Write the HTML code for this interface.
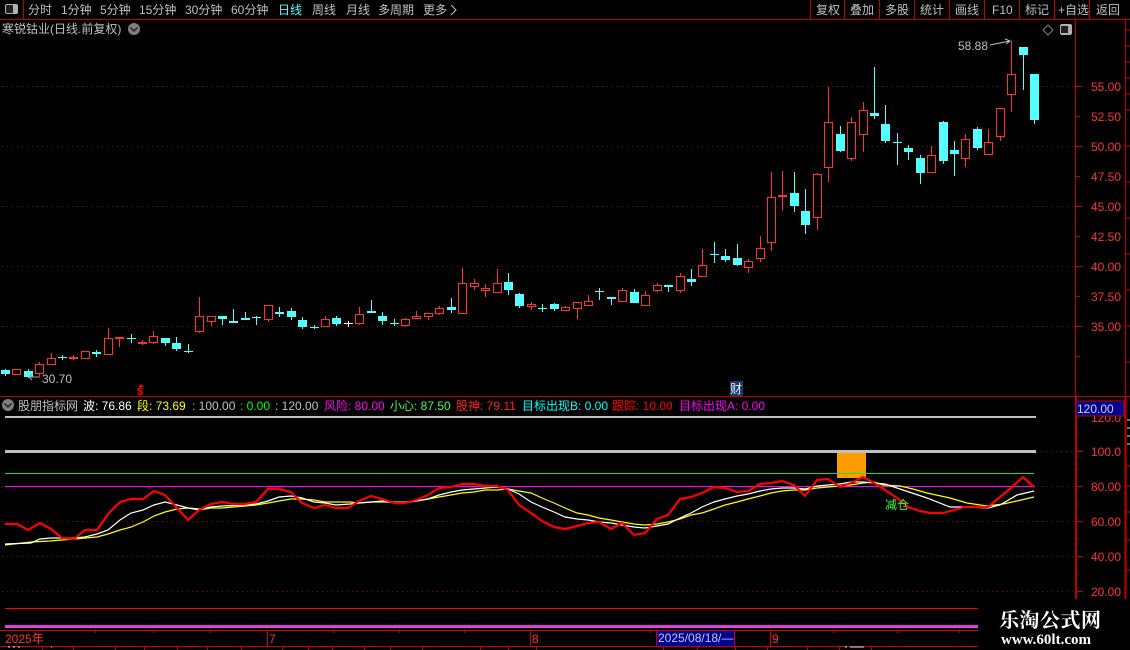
<!DOCTYPE html>
<html><head><meta charset="utf-8"><style>
html,body{margin:0;padding:0;background:#000;width:1130px;height:650px;overflow:hidden}
svg{display:block}
text{font-family:"Liberation Sans","WenQuanYi Zen Hei","Noto Sans CJK SC",sans-serif;font-size:12px;fill:#c0c0c0}
.c{shape-rendering:crispEdges}
.ax text{fill:#ff3232}
</style></head><body>
<svg width="1130" height="650" viewBox="0 0 1130 650" xmlns="http://www.w3.org/2000/svg">
<rect width="1130" height="650" fill="#000"/>
<!-- frame lines -->
<g class="c" stroke="#c00000" fill="none">
<path d="M0 19.5H1130M0 396.5H1130"/>
<path d="M23.5 0V19M810.5 0V19M844.5 0V19M879.5 0V19M914.5 0V19M949.5 0V19M984.5 0V19M1019.5 0V19M1054.5 0V19M1089.5 0V19"/>
<path d="M1075.5 19V396M1125.5 19V396"/>
<path d="M1125 30h5M1125 46h5M1125 62h5M1125 78h5M1125 94h5M1125 110h5M1125 146h5M1125 182h5M1125 218h5M1125 254h5M1125 290h5M1125 326h5M1125 362h5"/>
<path d="M1076 86.5h6M1076 116.5h4M1076 146.5h6M1076 176.5h4M1076 206.5h6M1076 236.5h4M1076 266.5h6M1076 296.5h4M1076 326.5h6M1076 356.5h4"/>
<path stroke-width="2" d="M1076 396V599M1125.5 396V599"/>
<path d="M1077 434h2M1077 451.5h6M1077 469h2M1077 486.5h6M1077 504h2M1077 521.5h6M1077 539h2M1077 556.5h6M1077 574h2M1077 591.5h6"/>
<path stroke="#e0e0e0" d="M1127 420h3M1127 428h3M1127 436h3M1127 444h3"/>
<path d="M1125 466h5M1125 486h5M1125 512h5M1125 540h5M1125 570h5"/>
</g>
<!-- dotted grid -->
<g class="c" stroke="#a00000" fill="none" stroke-dasharray="1 4">
<path d="M2 86.5H1075M2 146.5H1075M2 206.5H1075M2 266.5H1075M2 326.5H1075"/>
<path d="M1036 451.5H1075M2 486.5H1075M2 521.5H1075M2 556.5H1075M2 591.5H1075"/>
</g>
<!-- toolbar -->
<g class="c"><rect x="5" y="4" width="13" height="10" rx="2" fill="#b0b0b0"/><rect x="6" y="5" width="7" height="8" fill="#202020"/></g>
<text x="28" y="14">分时</text><text x="61" y="14">1分钟</text><text x="100" y="14">5分钟</text><text x="139" y="14">15分钟</text><text x="185" y="14">30分钟</text><text x="231" y="14">60分钟</text>
<text x="278" y="14" style="fill:#54ffff">日线</text><text x="312" y="14">周线</text><text x="346" y="14">月线</text><text x="378" y="14">多周期</text><text x="423" y="14">更多</text>
<path d="M451 5l5 5-5 5" stroke="#c0c0c0" fill="none"/>
<text x="816" y="14">复权</text><text x="850" y="14">叠加</text><text x="885" y="14">多股</text><text x="920" y="14">统计</text><text x="955" y="14">画线</text><text x="992" y="14">F10</text><text x="1025" y="14">标记</text><text x="1058" y="14">+自选</text><text x="1096" y="14">返回</text>
<text x="2" y="33">寒锐钴业(日线.前复权)</text>
<circle cx="134" cy="29" r="6" fill="#808080"/><path d="M130.500 27.500l3.500 3.500 3.500-3.500" stroke="#222" stroke-width="1.500" fill="none"/>
<path d="M1048 25l5 5-5 5-5-5z" stroke="#808080" fill="none"/>
<g class="c"><rect x="1060" y="24" width="12" height="11" rx="2" fill="#b0b0b0"/><rect x="1061" y="26" width="7" height="7" fill="#202020"/></g>
<!-- axis labels -->
<g class="ax">
<text x="1091" y="91">55.00</text><text x="1091" y="121">52.50</text><text x="1091" y="151">50.00</text><text x="1091" y="181">47.50</text><text x="1091" y="211">45.00</text><text x="1091" y="241">42.50</text><text x="1091" y="271">40.00</text><text x="1091" y="301">37.50</text><text x="1091" y="331">35.00</text>
<text x="1091" y="422">120.0</text><text x="1091" y="456">100.0</text><text x="1091" y="491">80.00</text><text x="1091" y="526">60.00</text><text x="1091" y="561">40.00</text><text x="1091" y="596">20.00</text>
</g>
<rect x="1076" y="401" width="48" height="15" fill="#000090" stroke="#c00000" class="c"/>
<text x="1077" y="413" style="fill:#d0d0f0">120.00</text>
<!-- candle wicks cyan -->
<path class="c" fill="none" stroke="#54ffff" d="M5.500 369V376M28.500 369V378M62.500 355V360M96.500 350V357M131.500 334V343M165.500 338V346M176.500 337V351M188.500 344V353M222.500 316V325M233.500 309V323M245.500 312V320M256.500 316V325M279.500 307V317M291.500 308V320M302.500 317V329M314.500 325V329M336.500 316V326M371.500 300V313M382.500 312V325M394.500 319V326M451.500 298V313M508.500 273V295M519.500 293V308M542.500 304V312M554.500 303V311M599.500 288V300M611.500 297V305M634.500 289V303M668.500 285V292M691.500 269V286M714.500 242V263M725.500 249V262M737.500 244V266M794.500 172V212M805.500 189V234M840.500 126V152M874.500 67V119M885.500 105V143M897.500 133V165M908.500 145V160M920.500 155V184M943.500 121V164M954.500 141V176M977.500 127V150M1023.500 47V90M1034.500 74V124"/>
<!-- candle bodies cyan -->
<path class="c" fill="#54ffff" d="M1 370h9v4h-9zM24 371h9v6h-9zM58 357h9v1h-9zM92 352h9v2h-9zM127 338h9v1h-9zM161 338h9v5h-9zM172 343h9v6h-9zM184 351h9v1h-9zM218 316h9v3h-9zM229 321h9v2h-9zM241 318h9v2h-9zM252 317h9v1h-9zM275 312h9v2h-9zM287 311h9v6h-9zM298 320h9v7h-9zM310 327h9v1h-9zM332 318h9v6h-9zM367 311h9v2h-9zM378 316h9v5h-9zM390 323h9v1h-9zM447 307h9v3h-9zM504 282h9v8h-9zM515 294h9v12h-9zM538 308h9v1h-9zM550 304h9v5h-9zM595 291h9v1h-9zM607 297h9v2h-9zM630 292h9v11h-9zM664 285h9v2h-9zM687 279h9v3h-9zM710 254h9v1h-9zM721 256h9v4h-9zM733 258h9v7h-9zM790 193h9v13h-9zM801 211h9v14h-9zM836 134h9v17h-9zM870 113h9v3h-9zM881 124h9v17h-9zM893 142h9v1h-9zM904 148h9v4h-9zM916 158h9v15h-9zM939 122h9v39h-9zM950 150h9v4h-9zM973 129h9v19h-9zM1019 47h9v8h-9zM1030 74h9v46h-9z"/>
<!-- white cross -->
<path class="c" stroke="#fff" fill="none" d="M348.500 321V327M344 323.500h9"/>
<!-- solid red -->
<path class="c" fill="none" stroke="#ff3232" d="M73.500 355V360M119.500 337V347M142.500 340V345M782.500 171V211"/>
<path class="c" fill="#ff3232" d="M69 357h9v2h-9zM115 337h9v2h-9zM138 342h9v2h-9zM778 195h9v2h-9z"/>
<!-- hollow red -->
<path class="c" fill="none" stroke="#ff3232" d="M12.500 369.500h8V374.500h-8z
M39.500 362V364M35.500 364.500h8V373.500h-8zM39.500 374V376
M51.500 353V358M47.500 358.500h8V364.500h-8z
M81.500 351.500h8V358.500h-8z
M108.500 328V338M104.500 338.500h8V354.500h-8z
M153.500 331V336M149.500 336.500h8V342.500h-8zM153.500 343V344
M199.500 297V316M195.500 316.500h8V331.500h-8zM199.500 332V333
M207.500 316.500h8V321.500h-8zM211.500 322V326
M264.500 305.500h8V319.500h-8zM268.500 320V322
M325.500 316V319M321.500 319.500h8V326.500h-8z
M359.500 307V314M355.500 314.500h8V323.500h-8zM359.500 324V325
M405.500 318V319M401.500 319.500h8V325.500h-8zM405.500 326V327
M416.500 311V316M412.500 316.500h8V318.500h-8z
M424.500 313.500h8V316.500h-8zM428.500 317V320
M439.500 306V308M435.500 308.500h8V313.500h-8zM439.500 314V315
M462.500 268V283M458.500 283.500h8V313.500h-8z
M474.500 279V283M470.500 283.500h8V286.500h-8zM474.500 287V290
M485.500 284V288M481.500 288.500h8V290.500h-8zM485.500 291V297
M497.500 269V283M493.500 283.500h8V292.500h-8z
M531.500 302V304M527.500 304.500h8V306.500h-8zM531.500 307V310
M565.500 306V307M561.500 307.500h8V310.500h-8z
M573.500 302.500h8V308.500h-8zM577.500 309V319
M588.500 295V301M584.500 301.500h8V305.500h-8z
M622.500 288V290M618.500 290.500h8V301.500h-8z
M645.500 291V295M641.500 295.500h8V305.500h-8z
M657.500 283V285M653.500 285.500h8V290.500h-8zM657.500 291V292
M680.500 273V276M676.500 276.500h8V290.500h-8zM680.500 291V293
M702.500 249V265M698.500 265.500h8V276.500h-8z
M748.500 259V261M744.500 261.500h8V267.500h-8zM748.500 268V273
M760.500 236V248M756.500 248.500h8V258.500h-8zM760.500 259V262
M771.500 172V197M767.500 197.500h8V242.500h-8zM771.500 243V251
M817.500 173V174M813.500 174.500h8V217.500h-8zM817.500 218V230
M828.500 87V122M824.500 122.500h8V167.500h-8zM828.500 168V182
M851.500 117V122M847.500 122.500h8V158.500h-8zM851.500 159V161
M863.500 102V110M859.500 110.500h8V134.500h-8zM863.500 135V152
M931.500 146V155M927.500 155.500h8V172.500h-8z
M965.500 134V139M961.500 139.500h8V158.500h-8zM965.500 159V167
M988.500 129V142M984.500 142.500h8V154.500h-8z
M996.500 108.500h8V136.500h-8zM1000.500 137V141
M1011.500 41V74M1007.500 74.500h8V94.500h-8zM1011.500 95V112"/>
<!-- annotations -->
<text x="958" y="50">58.88</text>
<path d="M990 45l20-4M1005 39l5 2-4 3M1011 41" stroke="#c0c0c0" fill="none"/>
<text x="42" y="383">30.70</text>
<path d="M29 377h11M32 374l-3 3 3 3" stroke="#a0a0a0" fill="none"/>
<text x="137" y="395" style="fill:#ff0000;font-weight:bold;font-size:11px">$</text>
<path d="M141 384l-3 3h6z" fill="#ff0000"/>
<rect x="730" y="381" width="13" height="15" fill="#1a3a6a"/>
<text x="730" y="393" style="fill:#e8f0ff">财</text>
<!-- legend -->
<circle cx="8" cy="405" r="6" fill="#808080"/><path d="M4.500 403.500l3.500 3.500 3.500-3.500" stroke="#222" stroke-width="1.500" fill="none"/>
<text x="18" y="410">股朋指标网</text>
<text x="83" y="410" style="fill:#fff">波: 76.86</text>
<text x="137" y="410" style="fill:#ffff00">段: 73.69</text>
<text x="192" y="410">: 100.00</text>
<text x="240" y="410" style="fill:#00ff00">: 0.00</text>
<text x="275" y="410">: 120.00</text>
<text x="324" y="410" style="fill:#ff00ff">风险: 80.00</text>
<text x="390" y="410" style="fill:#40ff40">小心: 87.50</text>
<text x="456" y="410" style="fill:#ff2020">股神: 79.11</text>
<text x="522" y="410" style="fill:#00ffff">目标出现B: 0.00</text>
<text x="612" y="410" style="fill:#ff0000">跟踪: 10.00</text>
<text x="679" y="410" style="fill:#ff00ff">目标出现A: 0.00</text>
<!-- indicator -->
<g class="c">
<rect x="5" y="416" width="1031" height="2" fill="#c0c0c0"/>
<rect x="5" y="450" width="1031" height="3" fill="#c0c0c0"/>
<rect x="837" y="453" width="29" height="25" fill="#ff9c00"/>
<rect x="5" y="473" width="1029" height="1" fill="#20e020"/>
<rect x="5" y="486" width="1030" height="1" fill="#ff00ff"/>
</g>
<polyline fill="none" stroke="#ffff00" stroke-width="1.200" points="5,545 31,542 50,541 74,539 97,537 108,534 120,530 131,527 143,522 154,516 165,512 177,509 188,508 199,510 211,508 222,508 245,506 256,505 268,503 279,501 291,499 302,499 314,500 325,502 336,502 350,502 359,503 371,502 405,502 416,501 428,499 439,497 451,495 462,493 474,492 485,490 497,490 508,489 519,491 531,493 542,498 554,503 565,508 577,513 588,515 599,518 611,520 622,522 634,524 645,525 657,524 668,522 680,519 691,515 702,513 714,509 725,505 737,502 748,499 760,496 771,493 782,491 794,490 805,490 817,488 828,487 840,486 851,485 863,483 874,482 883,485 900,486 913,489 927,493 950,498 967,503 987,506 1003,504 1017,501 1034,497"/>
<polyline fill="none" stroke="#ffffff" stroke-width="1.200" points="5,544 31,543 40,539 51,538 74,538 85,537 97,534 108,530 120,520 131,513 143,510 154,505 165,502 177,505 188,508 199,509 211,507 222,506 245,505 256,504 268,501 279,497 291,496 302,498 314,502 325,503 336,505 350,504 359,503 371,502 382,501 394,503 405,503 416,501 428,499 439,495 451,492 462,490 474,489 485,488 497,487 508,489 519,494 531,502 542,507 554,512 565,517 577,519 588,520 599,522 611,523 622,525 634,527 645,528 657,526 668,524 680,518 691,513 702,507 714,502 725,499 737,496 748,494 760,491 771,489 782,488 794,488 805,489 817,486 828,485 840,484 851,482 863,482 874,483 885,484 900,489 927,498 950,507 967,507 988,508 1000,505 1017,495 1034,491"/>
<polyline fill="none" stroke="#ff0000" stroke-width="2.200" stroke-linejoin="round" points="5,524 17,524 28,530 40,523 51,529 62,538 74,539 85,530 97,530 108,514 120,502 131,499 143,499 154,491 165,495 177,508 188,520 199,510 211,504 222,502 234,504 245,504 256,502 268,489 279,489 291,492 302,503 314,508 325,505 336,508 348,508 359,501 371,496 382,499 394,503 405,503 416,500 428,495 439,488 451,487 462,484 474,484 485,486 497,486 508,490 519,505 531,513 542,521 554,527 565,529 577,526 588,523 599,522 611,529 622,523 634,535 645,533 657,519 668,515 680,499 691,497 702,493 714,487 725,488 737,492 748,491 760,484 771,483 782,481 794,485 805,496 817,480 828,479 840,487 851,483 863,477 874,483 885,490 897,498 908,507 920,511 931,513 943,513 954,510 965,507 977,507 988,507 1000,497 1011,488 1023,477 1034,487"/>
<text x="885" y="509" style="fill:#40ff40">减仓</text>
<!-- bottom -->
<g class="c">
<rect x="5" y="608" width="973" height="1" fill="#ff0000"/>
<rect x="5" y="625" width="973" height="2" fill="#ff20ff"/>
<rect x="5" y="627" width="973" height="1" fill="#a080a0"/>
<path fill="none" stroke="#d00000" d="M0 630.500H978M0 646.500H978M267.500 630V646M530.500 630V646M770.500 630V646M95.500 631v2M153.500 631v2M210.500 631v2M333.500 631v2M399.500 631v2M464.500 631v2M650.500 631v2M833.500 631v2M897.500 631v2M959.500 631v2"/>
<path fill="none" stroke="#c00000" d="M42.500 647V650M73.500 647V650M115.500 647V650M144.500 647V650M177.500 647V650M207.500 647V650M241.500 647V650M282.500 647V650M308.500 647V650M332.500 647V650M364.500 647V650M390.500 647V650M422.500 647V650M480.500 647V650M508.500 647V650M536.500 647V650M663.500 647V650M697.500 647V650M735.500 647V650M767.500 647V650M807.500 647V650M839.500 647V650M871.500 647V650"/>
<rect x="657" y="631" width="77" height="15" fill="#000090"/>
<path stroke="#d00000" d="M656.500 630V646M734.500 630V646" fill="none"/>
<path stroke="#e0e0e0" d="M8 647h2M13 647h2M18 647h2M51 647h1M845 647h2M850 647h14" fill="none"/>
</g>
<text x="5" y="643" style="fill:#ff3232">2025年</text>
<text x="269" y="643" style="fill:#ff3232">7</text>
<text x="532" y="643" style="fill:#ff3232">8</text>
<text x="772" y="643" style="fill:#ff3232">9</text>
<text x="658" y="642" style="fill:#c8c8f0">2025/08/18/—</text>
<text x="999" y="627" style="font-family:'Noto Serif CJK SC','Liberation Serif',serif;font-size:20px;font-weight:bold;fill:#fff;letter-spacing:.5px">乐淘公式网</text>
<text x="1001" y="644" style="font-family:'Liberation Serif',serif;font-size:15px;font-weight:bold;fill:#fff">www.60lt.com</text>
</svg>
</body></html>
